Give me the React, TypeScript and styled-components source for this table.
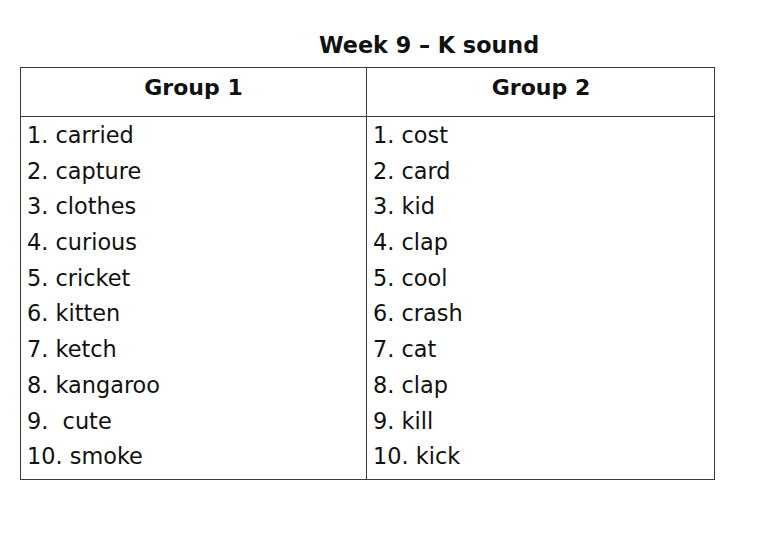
import React from "react";
import styled, { createGlobalStyle } from "styled-components";

const GlobalStyle = createGlobalStyle`
  html, body {
    margin: 0;
    padding: 0;
    background: #ffffff;
  }
  body {
    font-family: "DejaVu Sans", "Liberation Sans", sans-serif;
    color: #111111;
  }
`;

const Page = styled.div`
  width: 768px;
  height: 543px;
  padding: 28px 0 0 20px;
  box-sizing: border-box;
`;

const Title = styled.h1`
  margin: 0 0 4px 299px;
  height: 35px;
  line-height: 35px;
  font-size: 22.3px;
  font-weight: bold;
`;

const Table = styled.div`
  display: grid;
  grid-template-columns: 346px 348px;
  width: 695px;
  border: 1px solid #3a3a3a;
  box-sizing: border-box;
`;

const HeadCell = styled.div<{ $last?: boolean }>`
  height: 49px;
  display: flex;
  align-items: center;
  justify-content: center;
  padding-bottom: 9px;
  box-sizing: border-box;
  font-size: 22px;
  font-weight: bold;
  border-bottom: 1px solid #3a3a3a;
  border-right: ${({ $last }) => ($last ? "none" : "1px solid #3a3a3a")};
`;

const BodyCell = styled.div<{ $last?: boolean }>`
  padding: 0 0 5px 6px;
  border-right: ${({ $last }) => ($last ? "none" : "1px solid #3a3a3a")};
`;

const Word = styled.div`
  height: 35.7px;
  line-height: 37px;
  font-size: 22.4px;
  white-space: pre;
`;

const group1 = [
  "carried",
  "capture",
  "clothes",
  "curious",
  "cricket",
  "kitten",
  "ketch",
  "kangaroo",
  " cute",
  "smoke",
];

const group2 = [
  "cost",
  "card",
  "kid",
  "clap",
  "cool",
  "crash",
  "cat",
  "clap",
  "kill",
  "kick",
];

export default function App() {
  return (
    <>
      <GlobalStyle />
      <Page>
        <Title>Week 9 – K sound</Title>
        <Table>
          <HeadCell>Group 1</HeadCell>
          <HeadCell $last>Group 2</HeadCell>
          <BodyCell>
            {group1.map((w, i) => (
              <Word key={i}>{`${i + 1}. ${w}`}</Word>
            ))}
          </BodyCell>
          <BodyCell $last>
            {group2.map((w, i) => (
              <Word key={i}>{`${i + 1}. ${w}`}</Word>
            ))}
          </BodyCell>
        </Table>
      </Page>
    </>
  );
}
